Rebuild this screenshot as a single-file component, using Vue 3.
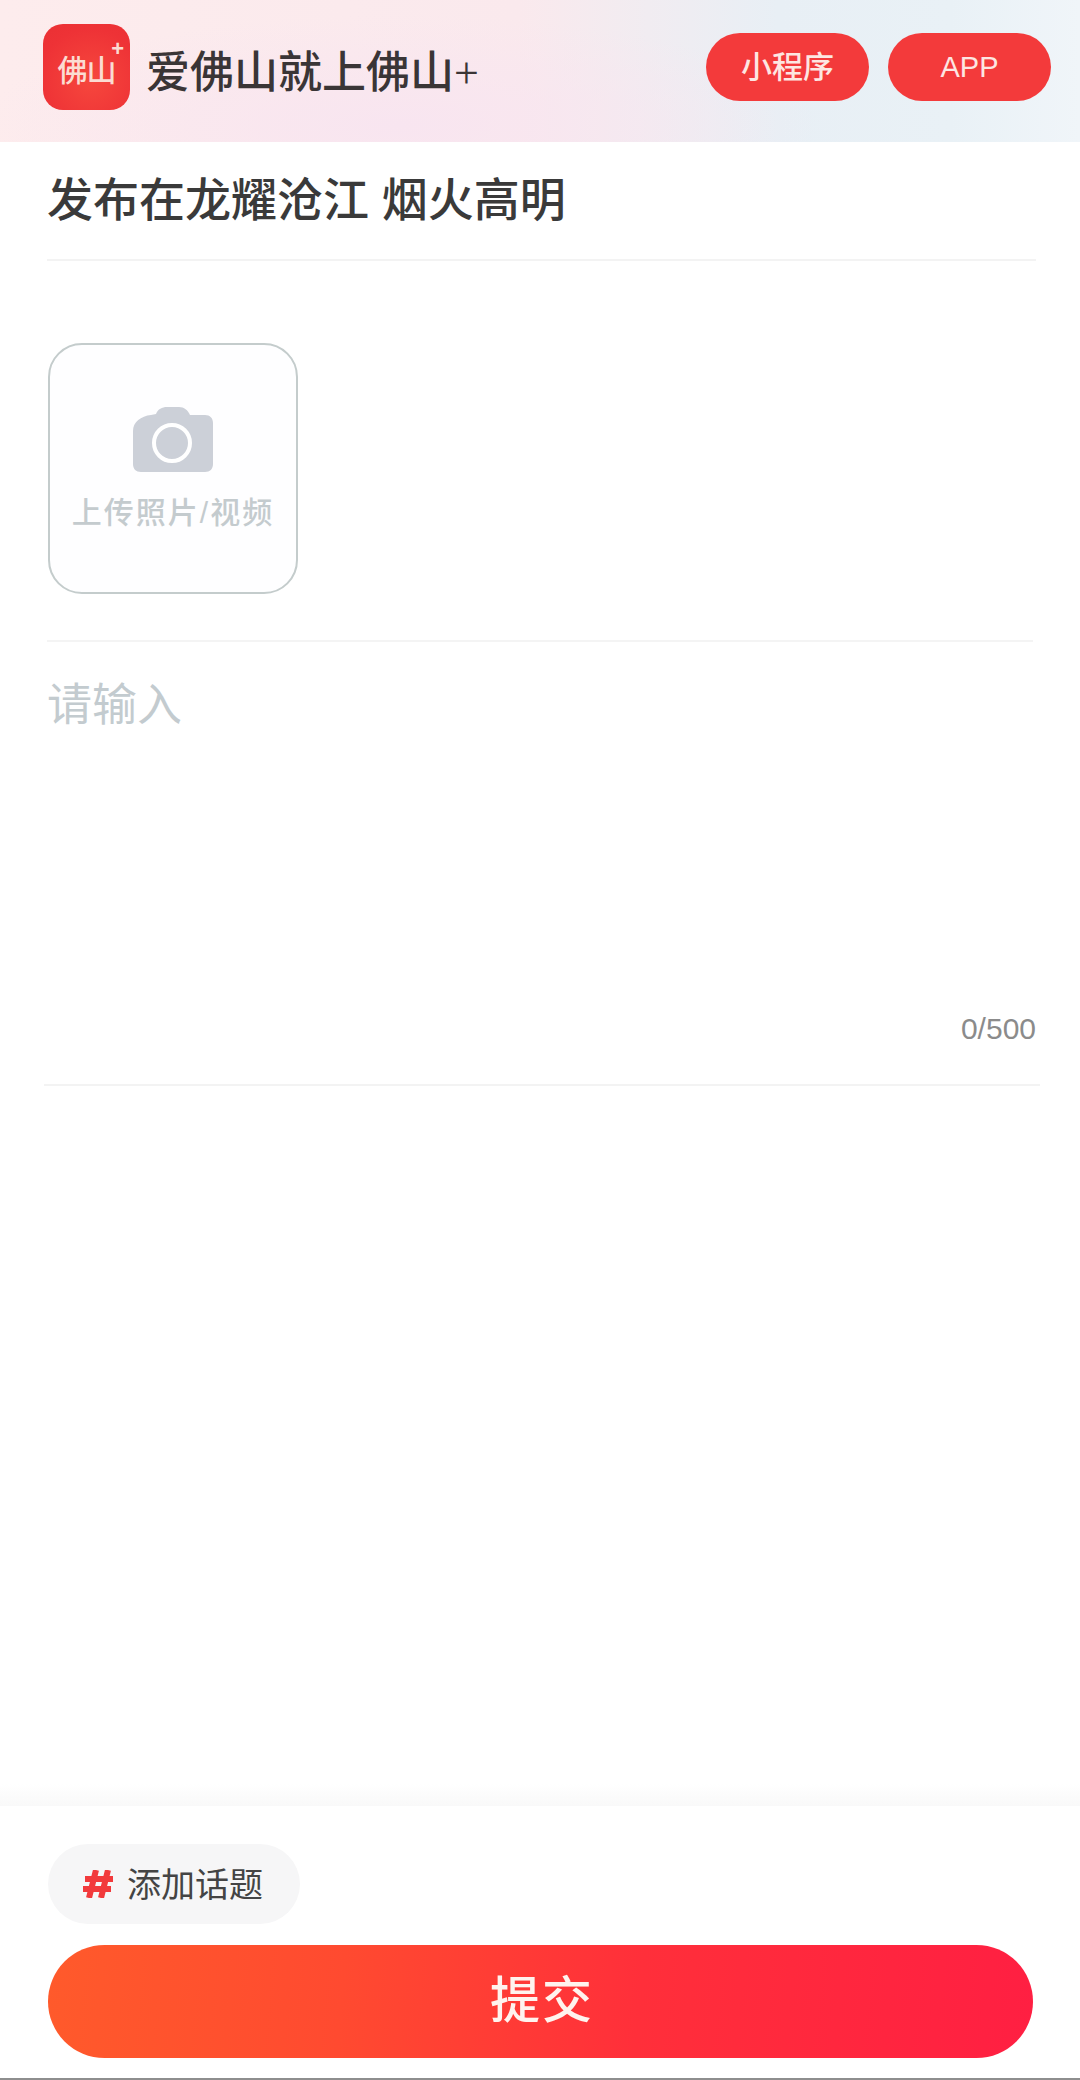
<script setup>
const title = '发布在龙耀沧江 烟火高明'
const count = '0/500'
</script>

<template>
  <div class="page">
    <header class="top">
      <div class="logo">
        <span class="logo-text">佛山</span>
        <span class="logo-plus">+</span>
      </div>
      <div class="brand">爱佛山就上佛山<span class="brand-plus">+</span></div>
      <div class="top-btns">
        <span class="pill pill-cn">小程序</span>
        <span class="pill">APP</span>
      </div>
    </header>

    <main class="form">
      <div class="channel">{{ title }}</div>
      <div class="upload-row">
        <div class="upload">
          <svg class="cam" viewBox="0 0 80 65" aria-hidden="true">
            <path fill="#ccd0d8" d="M0 24C0 15 8 9 18 8l5-1C25 2 29 0 34 0h12c5 0 9 3 11 8h15c5 0 8 3 8 8v41c0 5-3 8-8 8H8c-5 0-8-3-8-8z" />
            <circle cx="39" cy="36" r="18" fill="none" stroke="#fff" stroke-width="4" />
          </svg>
          <span class="upload-label">上传照片/视频</span>
        </div>
      </div>
      <div class="editor">
        <div class="placeholder">请输入</div>
        <div class="count">{{ count }}</div>
      </div>
    </main>

    <div class="shade"></div>
    <footer class="bottom">
      <div class="topic">
        <svg class="hash" viewBox="0 0 30 28" aria-hidden="true">
          <path fill="none" stroke="#f23a3c" stroke-width="6" d="M13 0 6 28M25 0 18 28M2 9h28M0 19h28" />
        </svg>
        <span class="topic-text">添加话题</span>
      </div>
      <button class="submit"><span class="submit-text">提交</span></button>
    </footer>
  </div>
</template>

<style>
html, body { margin: 0; background: #fff; }
</style>

<style scoped>
.page {
  width: 1080px;
  height: 2080px;
  display: flex;
  flex-direction: column;
  background: #fff;
  font-family: "Liberation Sans", "Noto Sans CJK SC", sans-serif;
  border-bottom: 2px solid #8e8e8e;
  box-sizing: border-box;
  overflow: hidden;
}
.top {
  height: 142px;
  flex: none;
  display: flex;
  align-items: center;
  padding: 0 29px 0 43px;
  box-sizing: border-box;
  background:
    radial-gradient(ellipse 420px 110px at 400px 125px, #f8e5f0 0%, rgba(248, 229, 240, 0) 100%),
    linear-gradient(90deg, #fdeced 0%, #fae9ed 48%, #e8eff5 72%, #e9f1f6 88%, #f0f5f9 100%);
}
.logo {
  position: relative;
  width: 87px;
  height: 86px;
  margin-top: -8px;
  flex: none;
  display: flex;
  align-items: center;
  justify-content: center;
  border-radius: 20px;
  background: radial-gradient(circle at 55% 65%, #f6473d 0%, #ee3236 70%, #ea3034 100%);
}
.logo-text {
  color: #fbdcd2;
  font-family: "Liberation Serif", "Noto Sans CJK SC", serif;
  font-size: 30px;
  font-weight: 500;
  letter-spacing: -1px;
  margin-top: 2px;
}
.logo-plus {
  position: absolute;
  right: 6px;
  top: 14px;
  color: #fbdcd2;
  font-size: 22px;
  line-height: 22px;
  font-weight: 700;
}
.brand {
  margin-left: 16px;
  margin-top: -4px;
  font-family: "Liberation Serif", "Noto Sans CJK SC", serif;
  font-size: 44px;
  font-weight: 500;
  color: #3a3536;
  white-space: nowrap;
}
.top-btns {
  margin-left: auto;
  display: flex;
  gap: 19px;
  margin-top: -8px;
}
.pill {
  width: 163px;
  height: 68px;
  border-radius: 34px;
  background: #f33a3b;
  color: #fde6e2;
  font-size: 29px;
  font-weight: 500;
  display: flex;
  align-items: center;
  justify-content: center;
}
.pill-cn {
  font-size: 31px;
  padding-bottom: 5px;
  box-sizing: border-box;
}
.form {
  flex: 1;
  padding: 0 47px;
}
.channel {
  height: 119px;
  line-height: 116px;
  font-size: 46px;
  font-weight: 500;
  color: #3a3a3a;
  border-bottom: 2px solid #f3f3f3;
  box-sizing: border-box;
  margin-right: -3px;
  white-space: nowrap;
}
.upload-row {
  padding-top: 82px;
  padding-bottom: 46px;
  border-bottom: 2px solid #f4f4f4;
}
.upload {
  width: 250px;
  height: 251px;
  margin-left: 1px;
  box-sizing: border-box;
  border: 2px solid #c4cccc;
  border-radius: 34px;
  display: flex;
  flex-direction: column;
  align-items: center;
  background: #fefeff;
}
.cam {
  width: 80px;
  height: 65px;
  margin-top: 62px;
}
.upload-label {
  margin-top: 21px;
  font-size: 30px;
  letter-spacing: 2px;
  line-height: 40px;
  color: #c4cbce;
  font-weight: 500;
  white-space: nowrap;
}
.editor {
  height: 444px;
  display: flex;
  flex-direction: column;
  justify-content: space-between;
  border-bottom: 2px solid #f3f3f3;
  box-sizing: border-box;
  margin-left: -3px;
  margin-right: -7px;
  padding: 38px 4px 38px 3px;
}
.placeholder {
  font-size: 45px;
  line-height: 52px;
  color: #c3cbcf;
}
.count {
  text-align: right;
  font-size: 30px;
  line-height: 34px;
  color: #8b8b8b;
}
.shade {
  flex: none;
  height: 22px;
  background: linear-gradient(180deg, #fff 0%, #f9f9f9 100%);
}
.bottom {
  flex: none;
  height: 272px;
  box-sizing: border-box;
  background: #fff;
  padding: 38px 47px 0 48px;
}
.topic {
  width: 252px;
  height: 80px;
  border-radius: 40px;
  background: #f6f6f7;
  display: flex;
  align-items: center;
  padding-left: 35px;
  box-sizing: border-box;
  font-size: 34px;
  color: #444;
  gap: 14px;
}
.topic-text {
  margin-top: -4px;
}
.hash {
  width: 30px;
  height: 28px;
  flex: none;
}
.submit {
  display: block;
  width: 985px;
  height: 113px;
  margin-top: 21px;
  border: 0;
  padding: 0 0 0 3px;
  border-radius: 57px;
  background: linear-gradient(95deg, #ff5a2b 0%, #ff4a30 30%, #ff2f3a 60%, #ff1f42 100%);
  color: #fff3ee;
  font-family: inherit;
  font-size: 50px;
  font-weight: 500;
  letter-spacing: 2px;
}
.submit-text {
  position: relative;
  top: -6px;
}
</style>
